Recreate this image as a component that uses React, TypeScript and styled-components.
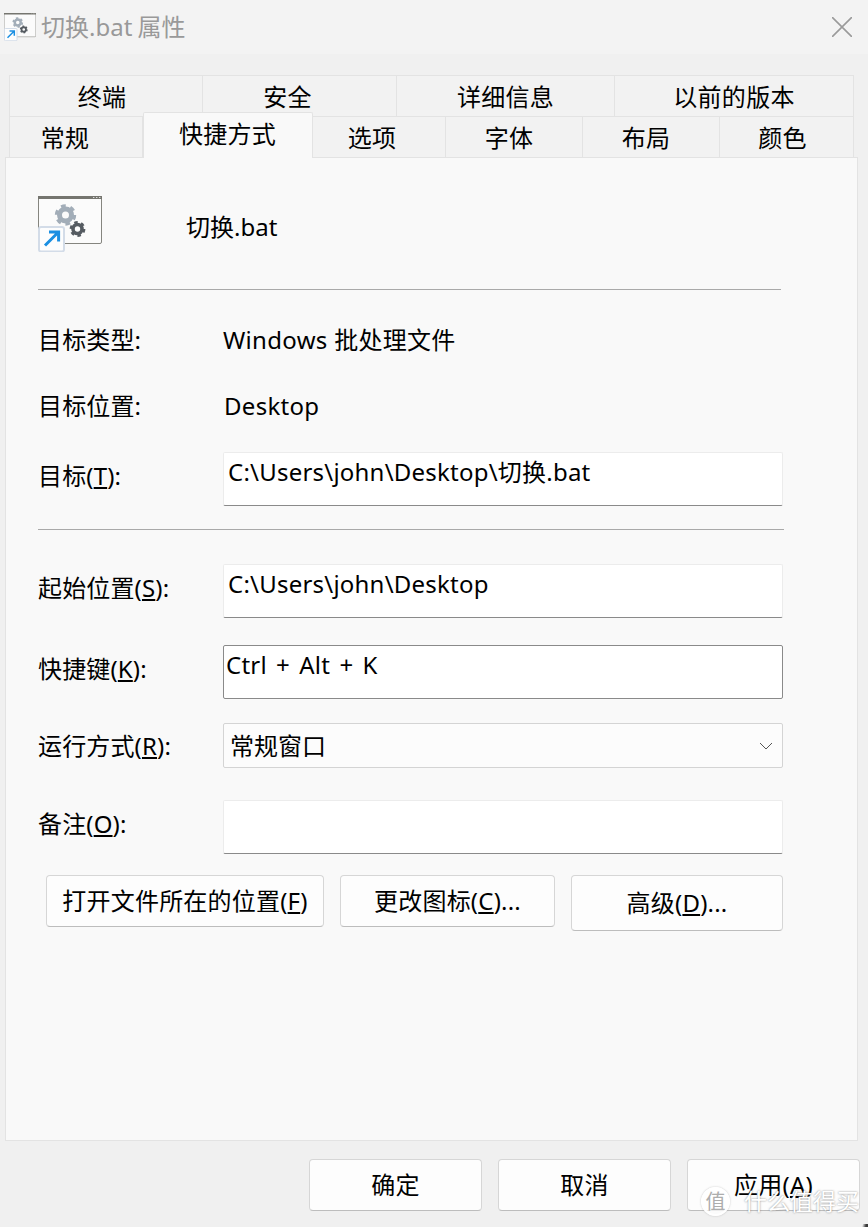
import styled, { createGlobalStyle } from 'styled-components';

const GlobalStyle = createGlobalStyle`
  html,
  body {
    margin: 0;
    background: #f0f0f0;
    overflow: hidden;
  }

  body {
    font-family: 'Noto Sans', 'Noto Sans CJK SC', sans-serif;
    font-size: 24px;
    color: #000;
  }
`;

const Page = styled.div`
  position: relative;
  width: 868px;
  height: 1227px;
  overflow: hidden;

  /* the desktop showing through at the window's rounded corner */
  &::after {
    content: '';
    position: absolute;
    right: 0;
    bottom: 0;
    width: 7px;
    height: 3px;
    background: linear-gradient(100deg, #f0f0f0 20%, #3a3a3a 70%);
  }
`;

const TitleBar = styled.header`
  display: flex;
  align-items: center;
  gap: 5px;
  height: 54px;
  padding: 0 16px 0 4px;
  box-sizing: border-box;
  background: #f3f3f3;
`;

const TitleText = styled.span`
  flex: 1;
  font-size: 24px;
  line-height: 1;
  word-spacing: -1px;
  color: #999;
`;

const CloseIcon = styled.svg`
  display: block;
  width: 20px;
  height: 20px;
  stroke: #9a9a9a;
  stroke-width: 1.6;
`;

const TabStrip = styled.nav`
  padding: 21px 0 0 9px;
`;

const TabRow = styled.div`
  display: flex;
  height: 41px;
`;

const Tab = styled.div<{ $width: number; $shift: number; $active?: boolean }>`
  position: relative;
  display: flex;
  align-items: center;
  justify-content: center;
  box-sizing: border-box;
  width: ${({ $width }) => $width}px;
  height: ${({ $active }) => ($active ? '46px' : '42px')};
  margin-top: ${({ $active }) => ($active ? '-4px' : '0')};
  padding-right: ${({ $shift }) => $shift * 2}px;
  padding-top: ${({ $active }) => ($active ? '0' : '2px')};
  padding-bottom: ${({ $active }) => ($active ? '4px' : '0')};
  background: ${({ $active }) => ($active ? '#f9f9f9' : '#f2f2f2')};
  border: 1px solid #e3e3e3;
  border-left-width: ${({ $active }) => ($active ? '1px' : '0')};
  border-bottom-width: ${({ $active }) => ($active ? '0' : '1px')};
  z-index: ${({ $active }) => ($active ? 2 : 1)};
  border-radius: ${({ $active }) => ($active ? '2px 2px 0 0' : '0')};
  font-size: 24px;
  line-height: 1;
  letter-spacing: 0.3px;

  &:first-child {
    border-left-width: 1px;
  }
`;

const Panel = styled.main`
  position: relative;
  box-sizing: border-box;
  width: 853px;
  height: 984px;
  margin-left: 5px;
  padding: 38px 0 0 32px;
  background: #f9f9f9;
  border: 1px solid #e3e3e3;
`;

const FileHeader = styled.div`
  display: flex;
  align-items: center;
  gap: 84px;
  height: 56px;
`;

const FileName = styled.span`
  line-height: 1;
  margin-top: 6px;
`;

const Divider = styled.hr<{ $width: number; $top: number }>`
  width: ${({ $width }) => $width}px;
  height: 1px;
  margin: ${({ $top }) => $top}px 0 0;
  border: 0;
  background: #a9a9a9;
`;

const FormRow = styled.div<{ $height: number; $top: number }>`
  display: grid;
  grid-template-columns: 185px 560px;
  align-items: center;
  height: ${({ $height }) => $height}px;
  margin-top: ${({ $top }) => $top}px;
`;

const Label = styled.label<{ $lift?: number }>`
  line-height: 1;
  letter-spacing: 0.15px;
  margin-bottom: ${({ $lift }) => $lift ?? 7}px;
`;

const Value = styled.span<{ $indent?: number }>`
  line-height: 1;
  letter-spacing: 0.3px;
  margin-left: ${({ $indent }) => $indent ?? 0}px;
`;

const TextBox = styled.div<{ $focused?: boolean; $indent?: number }>`
  box-sizing: border-box;
  height: 100%;
  padding: 5px 4px 0 ${({ $indent }) => $indent ?? 4}px;
  background: #fff;
  border: 1px solid ${({ $focused }) => ($focused ? '#8a8a8a' : '#ececec')};
  border-bottom-color: #8a8a8a;
  border-radius: 2px;
  line-height: 28px;
  letter-spacing: 0.22px;
  white-space: nowrap;
`;

const HotkeyText = styled.span`
  word-spacing: 2.8px;
`;

const SelectBox = styled.div`
  display: flex;
  align-items: center;
  justify-content: space-between;
  box-sizing: border-box;
  height: 100%;
  padding: 0 9px 0 6px;
  background: #fcfcfc;
  border: 1px solid #d4d4d4;
  border-radius: 2px;
  line-height: 1;
`;

const Chevron = styled.svg`
  display: block;
  width: 14px;
  height: 8px;
  fill: none;
  stroke: #555;
  stroke-width: 1;
`;

const ActionRow = styled.div`
  display: flex;
  align-items: flex-start;
  gap: 16px;
  margin: 21px 0 0 8px;
`;

const DialogButton = styled.button<{ $width: number; $height: number }>`
  box-sizing: border-box;
  width: ${({ $width }) => $width}px;
  height: ${({ $height }) => $height}px;
  padding: 0;
  background: #fdfdfd;
  border: 1px solid #d6d6d6;
  border-bottom-color: #bdbdbd;
  border-radius: 4px;
  font: inherit;
  line-height: 1;
  letter-spacing: 0.2px;
  color: #000;
`;

const Footer = styled.footer`
  display: flex;
  gap: 16px;
  margin: 18px 0 0 309px;
`;

const Watermark = styled.div`
  position: absolute;
  right: 9px;
  bottom: 11px;
  display: flex;
  align-items: center;
  gap: 14px;
  font-size: 23px;
  line-height: 1;
  color: #fff;
  text-shadow: 0 0 2px rgba(90, 90, 90, 0.75);
  pointer-events: none;
`;

const WatermarkBadge = styled.span`
  display: flex;
  align-items: center;
  justify-content: center;
  box-sizing: border-box;
  width: 29px;
  height: 29px;
  background: rgba(255, 255, 255, 0.7);
  border: 2px solid #fff;
  border-radius: 50%;
  box-shadow: 0 0 2px rgba(120, 120, 120, 0.45);
  font-size: 20px;
  color: #adadad;
  text-shadow: none;
`;

function ShortcutIcon({ size }: { size: number }) {
  return (
    <svg width={size} height={size * 0.875} viewBox="0 0 64 56" style={{ display: 'block', flex: 'none' }}>
      <rect x="0.5" y="0.5" width="63" height="47" rx="1.5" fill="#fbfbfb" stroke="#85857f" />
      <rect x="0" y="0" width="64" height="3" fill="#75756f" />
      <path d="M55 1.5h1.4M58 1.5h1.4M61 1.5h1.4" stroke="#ddd" strokeWidth="1" />
      <circle cx="27.5" cy="19" r="6" fill="none" stroke="#a2adb8" strokeWidth="5" />
      <circle cx="27.5" cy="19" r="9" fill="none" stroke="#a2adb8" strokeWidth="3.4" strokeDasharray="4.7 4.72" />
      <circle cx="39.5" cy="33" r="4.5" fill="none" stroke="#555b61" strokeWidth="3.6" />
      <circle cx="39.5" cy="33" r="6.6" fill="none" stroke="#555b61" strokeWidth="2.6" strokeDasharray="3.45 3.46" />
      <rect x="1" y="31" width="25" height="24.5" rx="2" fill="#fdfdfd" stroke="#d3dce8" strokeWidth="2" />
      <path d="M7 49.5 20 36.5M11 36h9.6v9.6" fill="none" stroke="#1b8fe2" strokeWidth="3" />
    </svg>
  );
}

const topTabs = [
  { label: '终端', width: 194, shift: 4 },
  { label: '安全', width: 194, shift: 12 },
  { label: '详细信息', width: 218, shift: 0 },
  { label: '以前的版本', width: 239, shift: -3 },
];

const bottomTabs = [
  { label: '常规', width: 134, shift: 11 },
  { label: '快捷方式', width: 170, shift: 0.5, active: true },
  { label: '选项', width: 133, shift: 7 },
  { label: '字体', width: 137, shift: 5 },
  { label: '布局', width: 137, shift: 5 },
  { label: '颜色', width: 134, shift: 4 },
];

export default function App() {
  return (
    <Page>
      <GlobalStyle />
      <TitleBar>
        <ShortcutIcon size={32} />
        <TitleText>切换.bat 属性</TitleText>
        <CloseIcon viewBox="0 0 20 20">
          <path d="M0 0 20 20M20 0 0 20" />
        </CloseIcon>
      </TitleBar>

      <TabStrip>
        <TabRow>
          {topTabs.map((tab) => (
            <Tab key={tab.label} $width={tab.width} $shift={tab.shift}>
              {tab.label}
            </Tab>
          ))}
        </TabRow>
        <TabRow>
          {bottomTabs.map((tab) => (
            <Tab key={tab.label} $width={tab.width} $shift={tab.shift} $active={tab.active}>
              {tab.label}
            </Tab>
          ))}
        </TabRow>
      </TabStrip>

      <Panel>
        <FileHeader>
          <ShortcutIcon size={64} />
          <FileName>切换.bat</FileName>
        </FileHeader>
        <Divider $width={743} $top={37} />

        <FormRow $height={40} $top={30}>
          <Label $lift={1}>目标类型:</Label>
          <Value>Windows 批处理文件</Value>
        </FormRow>
        <FormRow $height={40} $top={26}>
          <Label $lift={1}>目标位置:</Label>
          <Value $indent={1}>Desktop</Value>
        </FormRow>
        <FormRow $height={54} $top={26}>
          <Label>
            目标(<u>T</u>):
          </Label>
          <TextBox>C:\Users\john\Desktop\切换.bat</TextBox>
        </FormRow>
        <Divider $width={746} $top={23} />

        <FormRow $height={54} $top={34}>
          <Label>
            起始位置(<u>S</u>):
          </Label>
          <TextBox>C:\Users\john\Desktop</TextBox>
        </FormRow>
        <FormRow $height={54} $top={27}>
          <Label>
            快捷键(<u>K</u>):
          </Label>
          <TextBox $focused $indent={2}>
            <HotkeyText>Ctrl + Alt + K</HotkeyText>
          </TextBox>
        </FormRow>
        <FormRow $height={45} $top={24}>
          <Label $lift={0}>
            运行方式(<u>R</u>):
          </Label>
          <SelectBox>
            常规窗口
            <Chevron viewBox="0 0 14 8">
              <path d="M1 1 7 7 13 1" />
            </Chevron>
          </SelectBox>
        </FormRow>
        <FormRow $height={54} $top={32}>
          <Label>
            备注(<u>O</u>):
          </Label>
          <TextBox />
        </FormRow>

        <ActionRow>
          <DialogButton $width={278} $height={52}>
            打开文件所在的位置(<u>F</u>)
          </DialogButton>
          <DialogButton $width={215} $height={52}>
            更改图标(<u>C</u>)...
          </DialogButton>
          <DialogButton $width={212} $height={56}>
            高级(<u>D</u>)...
          </DialogButton>
        </ActionRow>
      </Panel>

      <Footer>
        <DialogButton $width={173} $height={52}>
          确定
        </DialogButton>
        <DialogButton $width={173} $height={52}>
          取消
        </DialogButton>
        <DialogButton $width={173} $height={52}>
          应用(<u>A</u>)
        </DialogButton>
      </Footer>

      <Watermark>
        <WatermarkBadge>值</WatermarkBadge>
        什么值得买
      </Watermark>
    </Page>
  );
}
